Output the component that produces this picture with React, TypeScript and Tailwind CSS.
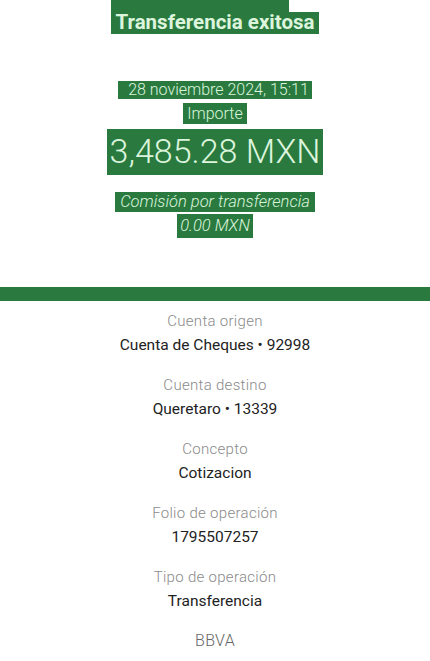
const details = [
  { label: 'Cuenta origen', value: 'Cuenta de Cheques • 92998' },
  { label: 'Cuenta destino', value: 'Queretaro • 13339' },
  { label: 'Concepto', value: 'Cotizacion' },
  { label: 'Folio de operación', value: '1795507257' },
  { label: 'Tipo de operación', value: 'Transferencia' },
]

const App = () => {
  return (
    <div className="w-[430px] h-[661px] overflow-hidden bg-white font-['Roboto',sans-serif]">
      {/* Header */}
      <div className="flex flex-col items-center h-[287px]">
        <div className="flex flex-col items-start">
          <div className="w-[178px] h-[12px] bg-[#2a7a40]"></div>
          <span className="bg-[#2a7a40] text-[#dcf5dc] text-[20.5px] font-bold leading-[20px] px-[4px] pb-[2px]">
            Transferencia exitosa
          </span>
        </div>

        <span className="mt-[47px] bg-[#2a7a40] text-[#dcf5dc] text-[16px] font-light leading-[18px] pl-[10px] pr-[3px]">
          28 noviembre 2024, 15:11
        </span>
        <span className="mt-[4px] bg-[#2a7a40] text-[#dcf5dc] text-[16px] font-light leading-[21px] px-[4px]">
          Importe
        </span>
        <span className="mt-[5px] bg-[#2a7a40] text-[#dcf5dc] text-[34px] font-light leading-[44px] px-[3px] pb-[2px]">
          3,485.28 MXN
        </span>
        <span className="mt-[17px] bg-[#2a7a40] text-[#dcf5dc] text-[16.5px] font-light italic leading-[20px] px-[5px]">
          Comisión por transferencia
        </span>
        <span className="mt-[2px] bg-[#2a7a40] text-[#dcf5dc] text-[16.5px] font-light italic leading-[24px] px-[3px]">
          0.00 MXN
        </span>
      </div>

      <div className="h-[14px] bg-[#2a7a40]"></div>

      {/* Details */}
      <div className="flex flex-col items-center pt-[11px]">
        {details.map((d) => (
          <div key={d.label} className="flex flex-col items-center h-[64px]">
            <span className="text-[15px] font-light leading-[18px] tracking-[0.3px] text-[#8a8a8a]">{d.label}</span>
            <span className="mt-[6px] text-[15.5px] leading-[18px] text-[#222]">{d.value}</span>
          </div>
        ))}
        <span className="text-[16px] font-light leading-[18px] tracking-[0.3px] text-[#666]">BBVA</span>
      </div>
    </div>
  )
}

export default App
